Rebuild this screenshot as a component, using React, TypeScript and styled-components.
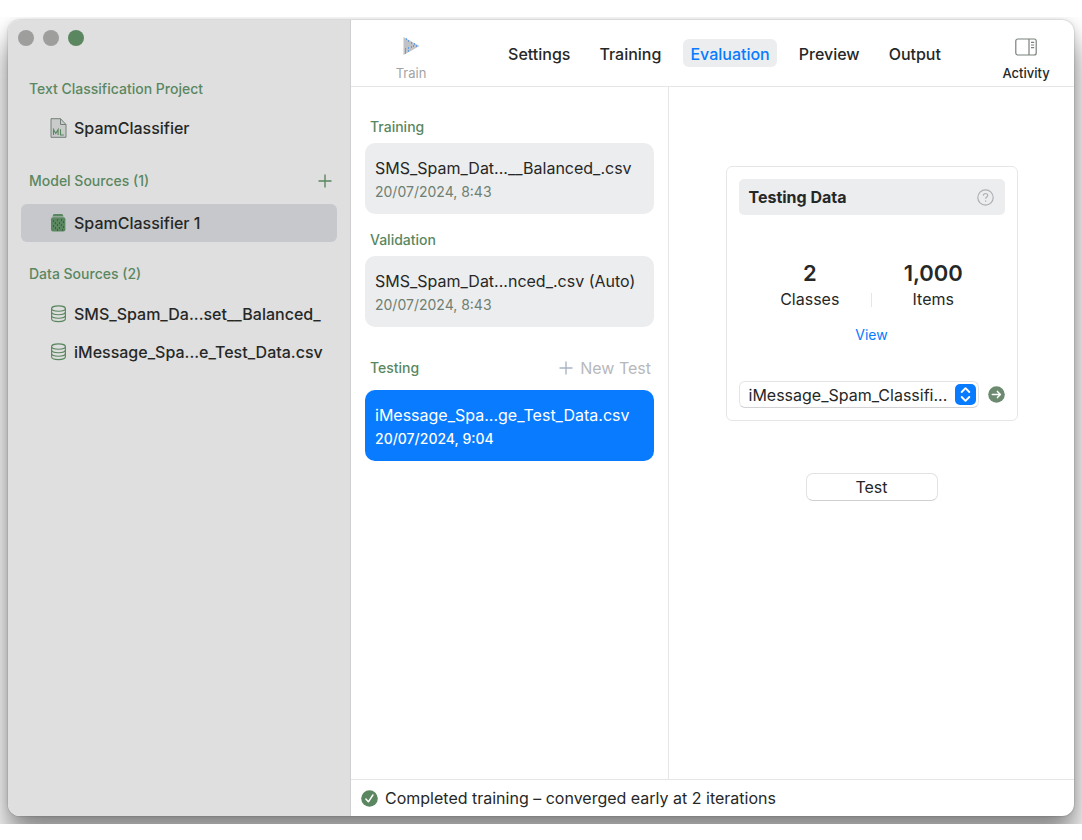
import React from 'react';
import styled, { createGlobalStyle } from 'styled-components';

const GREEN = '#5a875f';
const BLUE = '#087bff';
const INK = '#262827';
const LINE = '#e6e6e8';
const FILL = '#ecedef';

const GlobalStyle = createGlobalStyle`
  * { box-sizing: border-box; }
  body {
    margin: 0;
    background: #fff;
    color: ${INK};
    font: 400 16px/24px Inter, "Liberation Sans", sans-serif;
  }
  button, select { font: inherit; color: inherit; }
  h2, p { margin: 0; }
  svg { display: block; flex: none; }
`;

const Desktop = styled.div`
  display: flex;
  min-height: calc(100vh - 33px);
  margin: 17px 0 16px;
  padding: 3px 8px 8px;
  overflow: hidden;
`;

const Window = styled.div`
  display: flex;
  flex: 1;
  min-width: 0;
  overflow: hidden;
  border-radius: 12px;
  background: #fff;
  box-shadow:
    0 0 1px 1px rgba(0, 0, 0, 0.08),
    0 0 8px rgba(0, 0, 0, 0.1),
    0 22px 30px 2px rgba(0, 0, 0, 0.45);
`;

const Sidebar = styled.nav`
  flex: none;
  width: 343px;
  padding: 10px 13px;
  background: #dfdfdf;
  border-right: 1px solid #cfcfd2;
`;

const Lights = styled.div`
  display: flex;
  gap: 9px;
  margin: 0 -3px 23px;
`;

const Light = styled.button<{ $on?: boolean }>`
  width: 16px;
  height: 16px;
  padding: 0;
  border: 0;
  border-radius: 50%;
  background: ${p => (p.$on ? GREEN : '#9e9e9d')};
`;

const Group = styled.section`
  margin-bottom: 11px;
`;

const GroupHeader = styled.div<{ $height: number }>`
  display: flex;
  align-items: center;
  justify-content: space-between;
  height: ${p => p.$height}px;
  padding: 0 5px 0 8px;
`;

const Caption = styled.h2`
  color: ${GREEN};
  font-size: 14px;
  font-weight: 500;
  line-height: 20px;
`;

const PlainButton = styled.button`
  display: flex;
  align-items: center;
  gap: 7px;
  padding: 0;
  border: 0;
  background: none;
`;

const SourceRow = styled.button<{ $selected?: boolean }>`
  display: flex;
  align-items: center;
  gap: 7px;
  width: 100%;
  height: 38px;
  padding: 0 0 0 29px;
  border: 0;
  border-radius: 6px;
  background: ${p => (p.$selected ? '#c7c8cc' : 'none')};
  font-weight: 500;
  white-space: nowrap;
`;

const Main = styled.div`
  display: flex;
  flex: 1;
  flex-direction: column;
  min-width: 0;
`;

const Toolbar = styled.header`
  display: flex;
  flex: none;
  height: 67px;
  border-bottom: 1px solid ${LINE};
`;

const Tool = styled.button<{ $width: number; $muted?: boolean }>`
  display: flex;
  flex: none;
  flex-direction: column;
  align-items: center;
  justify-content: flex-end;
  gap: 7px;
  width: ${p => p.$width}px;
  padding: 0 0 3px;
  border: 0;
  background: none;
  color: ${p => (p.$muted ? '#a3a3a5' : INK)};
  font-size: 13px;
  font-weight: ${p => (p.$muted ? 400 : 500)};
  line-height: 20px;
`;

const Tabs = styled.nav`
  display: flex;
  flex: 1;
  align-items: center;
  justify-content: center;
  gap: 15px;
`;

const Tab = styled.button<{ $active?: boolean }>`
  height: 28px;
  padding: 2px 7px 0;
  border: 0;
  border-radius: 6px;
  background: ${p => (p.$active ? FILL : 'none')};
  color: ${p => (p.$active ? BLUE : INK)};
  font-weight: 500;
`;

const Content = styled.div`
  display: flex;
  flex: 1;
`;

const Runs = styled.aside`
  flex: none;
  width: 318px;
  padding: 24px 14px;
  border-right: 1px solid ${LINE};
`;

const RunGroup = styled.section`
  margin-bottom: 10px;
`;

const RunHeader = styled.div<{ $tall?: boolean }>`
  display: flex;
  align-items: center;
  justify-content: space-between;
  height: ${p => (p.$tall ? 44 : 32)}px;
  margin-top: ${p => (p.$tall ? 19 : 0)}px;
  padding: 0 3px 0 5px;
`;

const NewTest = styled(PlainButton)`
  color: #b7b8bc;
`;

const RunCard = styled.button<{ $selected?: boolean }>`
  display: block;
  width: 100%;
  height: 71px;
  padding: 2px 10px 0;
  border: 0;
  border-radius: 10px;
  background: ${p => (p.$selected ? BLUE : FILL)};
  color: ${p => (p.$selected ? '#fff' : INK)};
  text-align: left;
  white-space: nowrap;
`;

const RunName = styled.span`
  display: block;
`;

const RunDate = styled.span<{ $selected?: boolean }>`
  display: block;
  color: ${p => (p.$selected ? '#fff' : '#6f7f72')};
  font-size: 14px;
  font-weight: ${p => (p.$selected ? 500 : 400)};
`;

const Detail = styled.main`
  display: flex;
  flex: 1;
  flex-direction: column;
  align-items: center;
  gap: 52px;
  min-width: 0;
  padding-top: 79px;
`;

const DataCard = styled.section`
  width: 292px;
  padding: 12px;
  border: 1px solid ${LINE};
  border-radius: 6px;
`;

const DataHeader = styled.div`
  display: flex;
  align-items: center;
  justify-content: space-between;
  height: 36px;
  padding: 0 11px 0 10px;
  border-radius: 5px;
  background: ${FILL};
`;

const DataTitle = styled.h2`
  font-size: 16px;
  font-weight: 700;
`;

const Stats = styled.div`
  display: flex;
  align-items: flex-end;
  justify-content: center;
  margin: 44px 10px 12px;
`;

const Stat = styled.div`
  flex: 1;
  text-align: center;
`;

const StatValue = styled.p`
  font-size: 22px;
  font-weight: 600;
  line-height: 28px;
`;

const StatDivider = styled.span`
  width: 1px;
  height: 14px;
  margin-bottom: 4px;
  background: ${LINE};
`;

const ViewLink = styled.a`
  display: block;
  margin-bottom: 34px;
  color: ${BLUE};
  font-size: 14px;
  text-align: center;
  text-decoration: none;
`;

const SourcePicker = styled.div`
  display: flex;
  align-items: center;
  gap: 9px;
`;

const SelectBox = styled.div`
  position: relative;
  flex: 1;
`;

const Select = styled.select`
  display: block;
  width: 100%;
  height: 27px;
  padding: 0 24px 0 9px;
  appearance: none;
  border: 1px solid #e4e4e6;
  border-bottom-color: #d2d2d4;
  border-radius: 6px;
  background: #fff;
  line-height: 24px;
`;

const Stepper = styled.span`
  position: absolute;
  top: 3px;
  right: 3px;
  border-radius: 5px;
  background: ${BLUE};
  pointer-events: none;
`;

const TestButton = styled.button`
  width: 132px;
  height: 28px;
  padding: 0;
  border: 1px solid #e2e2e4;
  border-bottom-color: #cfcfd1;
  border-radius: 7px;
  background: #fff;
  line-height: 24px;
`;

const StatusBar = styled.footer`
  display: flex;
  flex: none;
  align-items: center;
  gap: 7px;
  height: 37px;
  padding: 0 10px;
  border-top: 1px solid ${LINE};
`;

const PlusIcon = ({ color }: { color: string }) => (
  <svg width="14" height="14" viewBox="0 0 14 14" fill="none" stroke={color} strokeWidth="1.4">
    <path d="M7 .5v13M.5 7h13" />
  </svg>
);

const ModelFileIcon = () => (
  <svg width="17" height="20" viewBox="0 0 17 20" fill="none" stroke="#748078">
    <path d="M1 .7h9.5l5.5 5.8v12.8H1z" fill="#c9cbcb" />
    <path d="M10.5.7v5.8H16" />
    <path d="M3.5 17v-5.5l2.3 4 2.3-4V17M10.5 11.2V17h3.3" stroke={GREEN} strokeWidth="1.1" />
  </svg>
);

const ModelIcon = () => (
  <svg width="17" height="20" viewBox="0 0 17 20">
    <path d="M3.6 1h8.8l1.2 2.6H2.4z" fill={GREEN} />
    <rect x="1" y="4.2" width="14.4" height="14.3" rx="2" fill={GREEN} />
    <path
      d="M3 8h1M7 7h1M11 7h1M5 10h1M9 10h1M13 9h1M7 12h1M11 12h1M3 13h1M5 15h1M9 15h1M13 14h1M12 17h1M7 17h1"
      stroke="#233b27"
    />
  </svg>
);

const DatabaseIcon = () => (
  <svg width="17" height="20" viewBox="0 0 17 20" fill="none" stroke={GREEN} strokeWidth="1.1">
    <ellipse cx="8.5" cy="4.6" rx="6.9" ry="2.7" />
    <path d="M1.6 4.6v10.2c0 1.6 3.1 2.8 6.9 2.8s6.9-1.2 6.9-2.8V4.6" />
    <path d="M1.6 8c0 1.5 3.1 2.7 6.9 2.7s6.9-1.2 6.9-2.7M1.6 11.5c0 1.5 3.1 2.7 6.9 2.7s6.9-1.2 6.9-2.7" />
  </svg>
);

const TrainIcon = () => (
  <svg width="18" height="20" viewBox="0 0 18 20">
    <path d="M1.5 1l16 9-16 9z" fill="#c0c2c6" />
    <path
      d="M4 3h1M6 5h1M9 7h1M12 8h1M14 10h1M3 13h1M6 12h1M9 11h1M11 10h1M3 15h1M6 15h1M3 17h1"
      stroke={BLUE}
    />
  </svg>
);

const ActivityIcon = () => (
  <svg width="22" height="18" viewBox="0 0 22 18" fill="none" stroke="#79817b" strokeWidth="1.2">
    <rect x=".8" y="1" width="20.4" height="16" rx="2" />
    <path d="M14 1v16M16 4.3h3.2M16 7h3.2M16 9.7h3.2" />
  </svg>
);

const HelpIcon = () => (
  <svg width="17" height="17" viewBox="0 0 17 17" fill="none" stroke="#aeb0b2" strokeWidth="1.2">
    <circle cx="8.5" cy="8.5" r="7.7" />
    <path d="M6.3 6.6c.1-1.3 1-2.1 2.2-2.1s2.2.8 2.2 1.9c0 1.6-2.1 1.7-2.1 3.4M8.6 11.4v1.4" />
  </svg>
);

const StepperIcon = () => (
  <svg width="21" height="21" viewBox="0 0 21 21" fill="none" stroke="#fff" strokeWidth="1.9" strokeLinecap="round" strokeLinejoin="round">
    <path d="M6.7 8l3.8-3.8L14.3 8M6.7 13l3.8 3.8 3.8-3.8" />
  </svg>
);

const GoIcon = () => (
  <svg width="17" height="17" viewBox="0 0 17 17" fill="none" stroke="#fff" strokeWidth="1.5" strokeLinecap="round" strokeLinejoin="round">
    <circle cx="8.5" cy="8.5" r="8.3" fill="#6b8a6f" stroke="none" />
    <path d="M4.3 8.5h8M9.4 5.4l3 3.1-3 3.1" />
  </svg>
);

const DoneIcon = () => (
  <svg width="17" height="17" viewBox="0 0 17 17" fill="none" stroke="#fff" strokeWidth="1.5" strokeLinecap="round" strokeLinejoin="round">
    <circle cx="8.5" cy="8.5" r="8.3" fill={GREEN} stroke="none" />
    <path d="M4.9 9l2.5 2.8 4.5-6.8" />
  </svg>
);

interface RunProps {
  label: string;
  name: string;
  date: string;
  selected?: boolean;
  action?: React.ReactNode;
}

const Run = ({ label, name, date, selected, action }: RunProps) => (
  <RunGroup>
    <RunHeader $tall={!!action}>
      <Caption>{label}</Caption>
      {action}
    </RunHeader>
    <RunCard $selected={selected}>
      <RunName>{name}</RunName>
      <RunDate $selected={selected}>{date}</RunDate>
    </RunCard>
  </RunGroup>
);

const TABS = ['Settings', 'Training', 'Evaluation', 'Preview', 'Output'];

export default function App() {
  return (
    <>
      <GlobalStyle />
      <Desktop>
        <Window>
          <Sidebar>
            <Lights>
              <Light aria-label="Close" />
              <Light aria-label="Minimize" />
              <Light aria-label="Zoom" $on />
            </Lights>
            <Group>
              <GroupHeader $height={40}>
                <Caption>Text Classification Project</Caption>
              </GroupHeader>
              <SourceRow><ModelFileIcon />SpamClassifier</SourceRow>
            </Group>
            <Group>
              <GroupHeader $height={46}>
                <Caption>Model Sources (1)</Caption>
                <PlainButton aria-label="Add model source"><PlusIcon color={GREEN} /></PlainButton>
              </GroupHeader>
              <SourceRow $selected><ModelIcon />SpamClassifier 1</SourceRow>
            </Group>
            <Group>
              <GroupHeader $height={42}>
                <Caption>Data Sources (2)</Caption>
              </GroupHeader>
              <SourceRow><DatabaseIcon />SMS_Spam_Da...set__Balanced_</SourceRow>
              <SourceRow><DatabaseIcon />iMessage_Spa...e_Test_Data.csv</SourceRow>
            </Group>
          </Sidebar>
          <Main>
            <Toolbar>
              <Tool $width={120} $muted><TrainIcon />Train</Tool>
              <Tabs>
                {TABS.map(tab => (
                  <Tab key={tab} $active={tab === 'Evaluation'}>{tab}</Tab>
                ))}
              </Tabs>
              <Tool $width={96}><ActivityIcon />Activity</Tool>
            </Toolbar>
            <Content>
              <Runs>
                <Run label="Training" name="SMS_Spam_Dat...__Balanced_.csv" date="20/07/2024, 8:43" />
                <Run label="Validation" name="SMS_Spam_Dat...nced_.csv (Auto)" date="20/07/2024, 8:43" />
                <Run
                  label="Testing"
                  name="iMessage_Spa...ge_Test_Data.csv"
                  date="20/07/2024, 9:04"
                  selected
                  action={<NewTest><PlusIcon color="#a9b4c4" />New Test</NewTest>}
                />
              </Runs>
              <Detail>
                <DataCard>
                  <DataHeader>
                    <DataTitle>Testing Data</DataTitle>
                    <PlainButton aria-label="Help"><HelpIcon /></PlainButton>
                  </DataHeader>
                  <Stats>
                    <Stat><StatValue>2</StatValue><p>Classes</p></Stat>
                    <StatDivider />
                    <Stat><StatValue>1,000</StatValue><p>Items</p></Stat>
                  </Stats>
                  <ViewLink href="#view">View</ViewLink>
                  <SourcePicker>
                    <SelectBox>
                      <Select aria-label="Testing data source">
                        <option>iMessage_Spam_Classifi...</option>
                      </Select>
                      <Stepper><StepperIcon /></Stepper>
                    </SelectBox>
                    <PlainButton aria-label="Show data source"><GoIcon /></PlainButton>
                  </SourcePicker>
                </DataCard>
                <TestButton>Test</TestButton>
              </Detail>
            </Content>
            <StatusBar><DoneIcon />Completed training – converged early at 2 iterations</StatusBar>
          </Main>
        </Window>
      </Desktop>
    </>
  );
}
